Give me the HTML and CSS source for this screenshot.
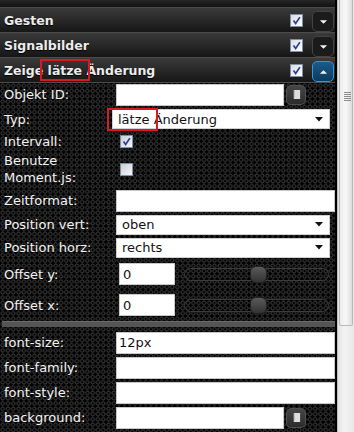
FILE: index.html
```html
<!DOCTYPE html>
<html lang="de">
<head>
  <meta charset="UTF-8">
  <title>Widget Einstellungen</title>
  <link rel="stylesheet" href="styles.css">
</head>
<body>
  <div class="frame">
    <div class="panel">
      <div class="stub"></div>

      <div class="head">
        <span class="title">Gesten</span>
        <span class="check on"><svg viewBox="0 0 13 13"><path d="M3 6.5 L5.5 10 L10.5 2.5" /></svg></span>
        <span class="toggle"><svg viewBox="0 0 10 6"><path d="M1 1 H9 L5 5 Z" /></svg></span>
      </div>
      <div class="head">
        <span class="title">Signalbilder</span>
        <span class="check on"><svg viewBox="0 0 13 13"><path d="M3 6.5 L5.5 10 L10.5 2.5" /></svg></span>
        <span class="toggle"><svg viewBox="0 0 10 6"><path d="M1 1 H9 L5 5 Z" /></svg></span>
      </div>
      <div class="head">
        <span class="title">Zeige lätze Änderung</span>
        <span class="check on"><svg viewBox="0 0 13 13"><path d="M3 6.5 L5.5 10 L10.5 2.5" /></svg></span>
        <span class="toggle active"><svg viewBox="0 0 10 6"><path d="M1 5 H9 L5 1 Z" /></svg></span>
        <span class="mark mark-head"></span>
      </div>

      <div class="form">
        <div class="row h23">
          <span class="label">Objekt ID:</span>
          <input class="field short" type="text" value="">
          <span class="pick"><svg viewBox="0 0 10 12"><rect x="2" y="1" width="7" height="10" /><path d="M1.5 2.5 H3 M1.5 4.5 H3 M1.5 6.5 H3 M1.5 8.5 H3" /></svg></span>
        </div>
        <div class="row h26">
          <span class="label">Typ:</span>
          <div class="select typ"><span>lätze Änderung</span><svg viewBox="0 0 8 5"><path d="M0 0 H8 L4 4.5 Z" /></svg></div>
          <span class="mark mark-typ"></span>
        </div>
        <div class="row h18">
          <span class="label">Intervall:</span>
          <span class="check on form-check"><svg viewBox="0 0 13 13"><path d="M3 6.5 L5.5 10 L10.5 2.5" /></svg></span>
        </div>
        <div class="row h38">
          <span class="label two">Benutze<br>Moment.js:</span>
          <span class="check form-check"></span>
        </div>
        <div class="row h25">
          <span class="label">Zeitformat:</span>
          <input class="field long" type="text" value="">
        </div>
        <div class="row h23">
          <span class="label">Position vert:</span>
          <div class="select"><span>oben</span><svg viewBox="0 0 8 5"><path d="M0 0 H8 L4 4.5 Z" /></svg></div>
        </div>
        <div class="row h23">
          <span class="label">Position horz:</span>
          <div class="select"><span>rechts</span><svg viewBox="0 0 8 5"><path d="M0 0 H8 L4 4.5 Z" /></svg></div>
        </div>
        <div class="row h30">
          <span class="label">Offset y:</span>
          <input class="field num" type="text" value="0">
          <div class="slider"><span class="knob"></span></div>
        </div>
        <div class="row h32">
          <span class="label">Offset x:</span>
          <input class="field num" type="text" value="0">
          <div class="slider"><span class="knob"></span></div>
        </div>

        <div class="divider"></div>

        <div class="row h25">
          <span class="label">font-size:</span>
          <input class="field long" type="text" value="12px">
        </div>
        <div class="row h25">
          <span class="label">font-family:</span>
          <input class="field long" type="text" value="">
        </div>
        <div class="row h25">
          <span class="label">font-style:</span>
          <input class="field long" type="text" value="">
        </div>
        <div class="row h25">
          <span class="label">background:</span>
          <input class="field short" type="text" value="">
          <span class="pick"><svg viewBox="0 0 10 12"><rect x="2" y="1" width="7" height="10" /><path d="M1.5 2.5 H3 M1.5 4.5 H3 M1.5 6.5 H3 M1.5 8.5 H3" /></svg></span>
        </div>
        <div class="row h25">
          <span class="label"></span>
          <input class="field short" type="text" value="">
          <span class="pick"><svg viewBox="0 0 10 12"><rect x="2" y="1" width="7" height="10" /><path d="M1.5 2.5 H3 M1.5 4.5 H3 M1.5 6.5 H3 M1.5 8.5 H3" /></svg></span>
        </div>
      </div>
    </div>

    <div class="scrollbar">
      <div class="thumb">
        <span class="grip"></span>
      </div>
    </div>
  </div>
</body>
</html>
```

FILE: styles.css
```css
* {
  box-sizing: border-box;
}

html, body {
  margin: 0;
  padding: 0;
  background: #000;
}

body {
  font-family: 'DejaVu Sans', Verdana, sans-serif;
  font-size: 13px;
  color: #f0f0f0;
}

.frame {
  display: flex;
  width: 354px;
  height: 432px;
  overflow: hidden;
}

.panel {
  width: 337px;
  flex: none;
  background: #000;
  padding-right: 2px;
}

/* section headers */

.stub {
  height: 8px;
  background: linear-gradient(#262626, #121212);
  border-bottom: 1px solid #4a4a4a;
}

.head {
  position: relative;
  display: flex;
  align-items: center;
  height: 25px;
  padding-left: 4px;
  background: linear-gradient(#3a3a3a, #2a2a2a 45%, #161616);
  border-bottom: 1px solid #4c4c4c;
}

.head .title {
  flex: 1;
  font-weight: bold;
  font-size: 12.5px;
  color: #ececec;
  text-shadow: 0 1px 1px #000;
}

.check {
  display: inline-block;
  width: 13px;
  height: 13px;
  border: 1px solid #7f8fa6;
  background: linear-gradient(135deg, #d9dde3, #ffffff);
}

.check svg {
  display: block;
  width: 11px;
  height: 11px;
  fill: none;
  stroke: #2b3c9c;
  stroke-width: 2;
}

.head .check {
  margin-right: 9px;
}

.toggle {
  display: flex;
  align-items: center;
  justify-content: center;
  width: 22px;
  height: 21px;
  margin-top: 3px;
  margin-right: 1px;
  border: 1px solid #444;
  border-radius: 5px;
  background: #1b1b1b;
}

.toggle svg {
  width: 9px;
  height: 6px;
  fill: #f4f4f4;
}

.toggle.active {
  border-color: #3f93cf;
  background: linear-gradient(#1a5c8c, #0c3a5e);
}

.mark {
  position: absolute;
  border: 2px solid #d8191e;
}

.mark-head {
  left: 40px;
  top: 1px;
  width: 50px;
  height: 22px;
}

/* form */

.form {
  background-color: #000;
  background-image: radial-gradient(circle, transparent 1.1px, #363636 1.5px, #363636 2.1px, transparent 2.5px);
  background-size: 5.3px 5.3px;
}

.row {
  position: relative;
  display: flex;
  align-items: center;
}

.h18 { height: 18px; }
.h23 { height: 23px; }
.h25 { height: 25px; }
.h26 { height: 26px; }
.h30 { height: 30px; }
.h32 { height: 32px; }
.h38 { height: 38px; }

.label {
  width: 116px;
  flex: none;
  padding-left: 4px;
  color: #f2f2f2;
  white-space: nowrap;
}

.label.two {
  line-height: 17px;
}

.field {
  height: 22px;
  padding: 0 2px;
  border: 1px solid #c8c8c8;
  background: #fff;
  font-family: 'DejaVu Sans', Verdana, sans-serif;
  font-size: 13px;
  color: #111;
  outline: none;
}

.field.short {
  width: 168px;
}

.field.long {
  width: 220px;
}

.field.num {
  width: 56px;
  margin-left: 3px;
  padding-left: 3px;
}

.pick {
  display: flex;
  align-items: center;
  justify-content: center;
  width: 20px;
  height: 20px;
  margin-left: 2px;
  border: 1px solid #505050;
  border-radius: 5px;
  background: linear-gradient(#454545, #2c2c2c);
}

.pick svg {
  width: 9px;
  height: 11px;
}

.pick rect {
  fill: #dedede;
}

.pick path {
  stroke: #888;
  stroke-width: 1;
}

.select {
  display: flex;
  align-items: center;
  justify-content: space-between;
  width: 214px;
  height: 20px;
  padding: 0 6px 0 5px;
  background: #fff;
  border: 1px solid #d0d0d0;
  color: #111;
}

.select.typ {
  width: 218px;
  margin-left: -4px;
}

.select svg {
  width: 8px;
  height: 5px;
  fill: #111;
}

.mark-typ {
  left: 107px;
  top: 2px;
  width: 51px;
  height: 23px;
}

.form-check {
  margin-left: 4px;
  background: linear-gradient(135deg, #c9cdd4, #f6f6f6);
}

.slider {
  position: relative;
  width: 145px;
  height: 13px;
  margin-left: 9px;
  border: 1px solid #3c3c3c;
  border-radius: 7px;
}

.slider .knob {
  position: absolute;
  left: 65px;
  top: -3px;
  width: 17px;
  height: 17px;
  border-radius: 6px;
  background: linear-gradient(#5a5a5a, #333);
  border: 1px solid #222;
}

.divider {
  height: 6px;
  margin: 0 0 3px 2px;
  border-top: 1px solid #6a6a6a;
  background: #555;
}

/* fake scrollbar */

.scrollbar {
  position: relative;
  width: 17px;
  flex: none;
  background: linear-gradient(to right, #e4e4e4, #f3f3f3 40%, #e8e8e8);
  border-left: 1px solid #bdbdbd;
}

.thumb {
  position: absolute;
  left: 1px;
  right: 1px;
  top: 0;
  height: 326px;
  border: 1px solid #b8b8b8;
  border-top: none;
  border-radius: 0 0 2px 2px;
  background: linear-gradient(to right, #ececec, #f8f8f8 50%, #dcdcdc);
}

.grip {
  position: absolute;
  left: 4px;
  top: 92px;
  width: 7px;
  height: 9px;
  background: repeating-linear-gradient(#8c8c8c 0 1px, transparent 1px 2px);
}
```
